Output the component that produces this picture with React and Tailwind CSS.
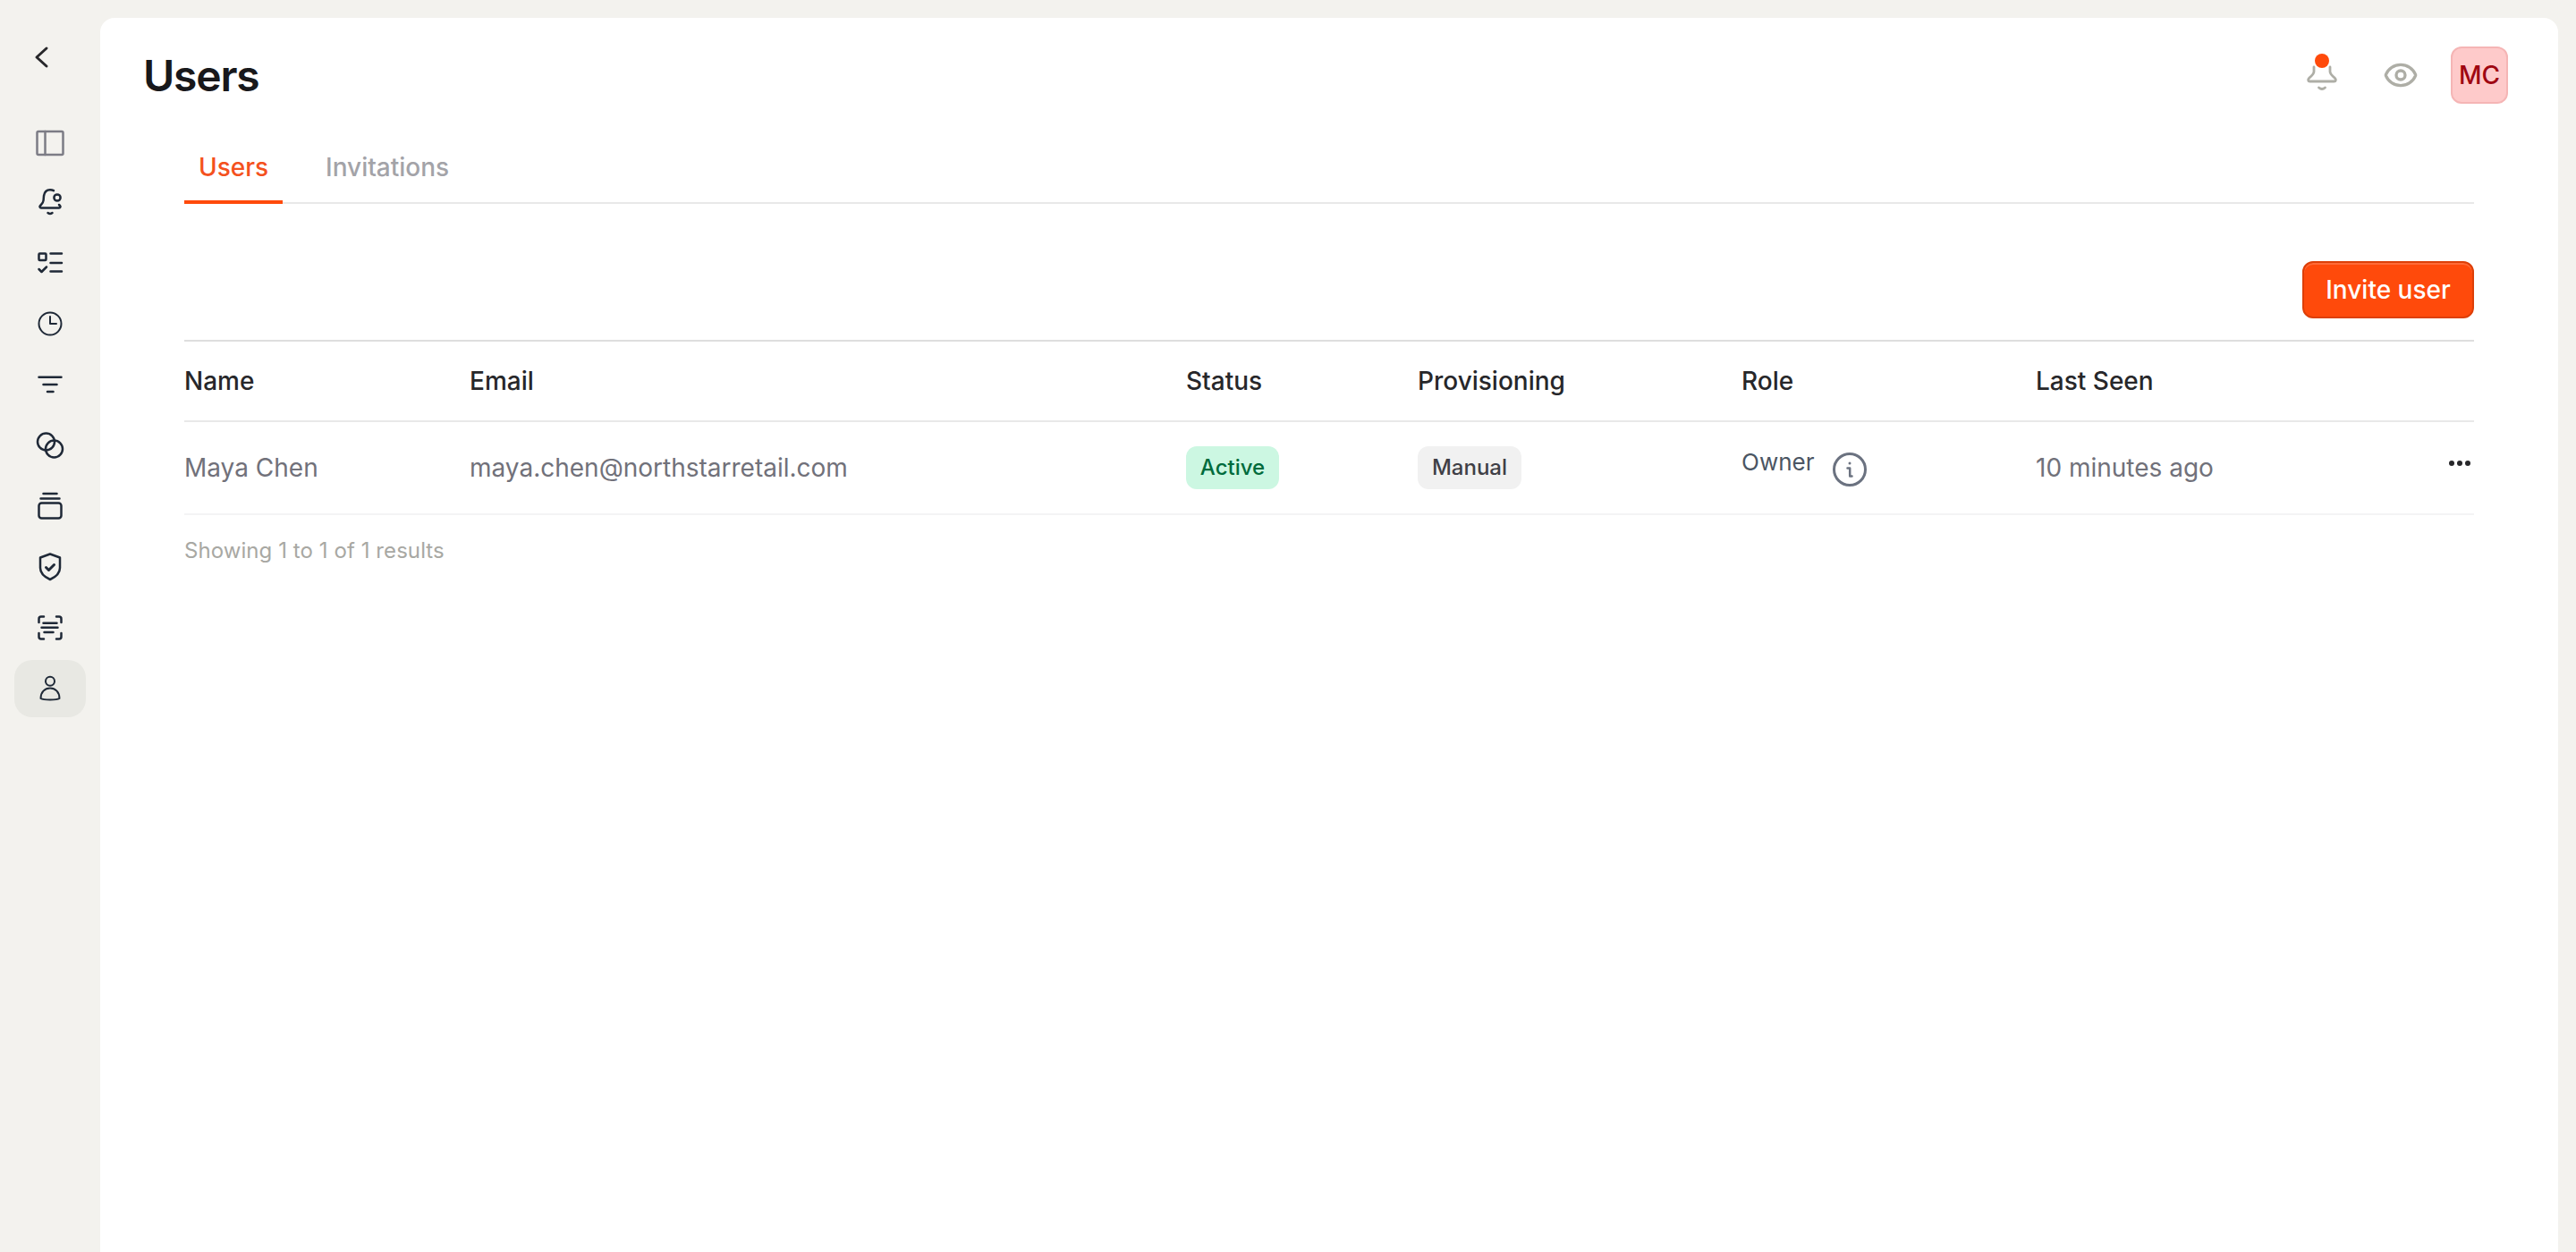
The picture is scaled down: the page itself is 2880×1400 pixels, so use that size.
import { Eye } from "lucide-react"

function SideIcon({ children, color = "#1f2937", sw = 2.5 }) {
  return (
    <svg width="40" height="40" viewBox="0 0 40 40" fill="none" stroke={color} strokeWidth={sw} strokeLinecap="round" strokeLinejoin="round">
      {children}
    </svg>
  )
}

const sideItems = [
  <><circle cx="28" cy="15" r="3.6" /><path d="M24 7.2C22.8 6.5 21.5 6.2 20 6.2C15.5 6.2 13.5 9.5 13 13L12.6 18C12.4 21 10.5 22.5 9 24C8 25 8.5 26.5 10 26.5H30C31.5 26.5 32 25 31 24L30 23" /><path d="M17.5 32Q20 34 22.5 32" /></>,
  <><rect x="7.5" y="9.5" width="8" height="7.5" rx="1" /><path d="M20.5 9.5H33M20.5 20H33M20.5 29.5H33" /><path d="M7.5 27L10.5 30L16 24.5" /></>,
  <><circle cx="20" cy="20" r="12.5" strokeWidth="2" /><path d="M20 12V20H27" strokeWidth="2" /></>,
  <path d="M7.5 11.7H32.5M12.5 20H27.5M17 28H23.5" />,
  <><circle cx="15.5" cy="16" r="9.5" /><circle cx="24.5" cy="24" r="9.5" /></>,
  <><path d="M12.5 6H27.5M9.5 11.5H30.5" /><rect x="7.5" y="16.5" width="25" height="17" rx="3" /></>,
  <><path d="M20 5.5L31 9.5V21C31 27 25.5 31.5 20 34C14.5 31.5 9 27 9 21V9.5Z" /><path d="M15.5 20.5L18.5 23.5L24.5 17.5" strokeWidth="3" /></>,
  <><path d="M7.5 14V10A2.5 2.5 0 0 1 10 7.5H13M27 7.5H30A2.5 2.5 0 0 1 32.5 10V14M32.5 26V30A2.5 2.5 0 0 1 30 32.5H27M13 32.5H10A2.5 2.5 0 0 1 7.5 30V26" /><path d="M12.5 14.7H27.5M10.5 19.8H28.5M13.5 25H23.5" /></>,
]

export default function App() {
  return (
    <div className="flex h-screen overflow-hidden bg-[#f3f2ee] font-['Inter',sans-serif]">
      <aside className="flex w-[112px] shrink-0 flex-col items-center pt-[32px]">
        <button className="flex h-[64px] w-[80px] items-center justify-center pr-[20px]">
          <SideIcon color="#27272a" sw={3}><path d="M26 10L15 20L26 30" /></SideIcon>
        </button>
        <div className="mt-[32px] flex flex-col gap-1">
          <div className="-mb-0.5 flex h-[64px] w-[80px] items-center justify-center">
            <SideIcon color="#7c7c85" sw={2.5}>
              <rect x="5.5" y="7" width="29" height="26" rx="1.5" />
              <path d="M14.5 7V33" />
            </SideIcon>
          </div>
          {sideItems.map((icon, i) => (
            <div key={i} className="flex h-[64px] w-[80px] items-center justify-center">
              <SideIcon>{icon}</SideIcon>
            </div>
          ))}
          <div className="flex h-[64px] w-[80px] items-center justify-center rounded-[20px] bg-[#e8e8e3]">
            <SideIcon sw={2}>
              <circle cx="20" cy="11.7" r="5" />
              <path d="M9.5 31C9.5 24 14 19.5 20 19.5C26 19.5 30.5 24 30.5 31C27 33 13 33 9.5 31Z" />
            </SideIcon>
          </div>
        </div>
      </aside>

      <main className="mt-[20px] mr-[20px] flex-1 rounded-t-2xl bg-white pt-[32px]">
        <header className="flex h-[64px] items-center justify-between pr-[56px] pl-[48px]">
          <h1 className="pt-[1px] text-[48px] leading-[64px] font-semibold tracking-tight text-[#18181b]">Users</h1>
          <div className="flex items-center">
            <div className="relative mr-[48px] h-[40px] w-[40px]">
              <svg width="40" height="40" viewBox="0 0 40 40" fill="none" stroke="#aeaea6" strokeWidth="2.8" strokeLinecap="round" strokeLinejoin="round">
                <path d="M11 11V16C11 19 8 21 5.5 23.5C4 25 4.5 27 6.5 27H33.5C35.5 27 36 25 34.5 23.5C32 21 29 19 29 16V11" />
                <path d="M16.5 34Q20 37 23.5 34" />
              </svg>
              <span className="absolute top-[-4px] left-[12px] h-[16px] w-[16px] rounded-full bg-[#ff4a0b]" />
            </div>
            <Eye size={40} strokeWidth={2} className="mr-[36px] text-[#aeaea6]" />
            <div className="flex h-[64px] w-[64px] items-center justify-center rounded-xl border-2 border-[#f5b5b5] bg-[#fecaca] text-[28px] font-medium text-[#9f0712]">MC</div>
          </div>
        </header>

        <div className="mr-[94px] ml-[94px]">
          <nav className="mt-[54px] flex gap-[32px] border-b-2 border-[#e8e8e8]">
            <div className="-mb-[2px] w-[110px] border-b-4 border-[#ff4a0b] pb-[20px] text-center text-[28px] leading-[34px] font-medium text-[#f4511e]">Users</div>
            <div className="px-[16px] pb-[20px] text-[28px] leading-[34px] font-medium text-[#a3a3a8]">Invitations</div>
          </nav>

          <div className="mt-[64px] mb-[24px] flex justify-end">
            <button className="h-[64px] w-[192px] rounded-xl border-2 border-[#dd3f08] bg-[#ff4a0b] text-[28px] font-medium text-white shadow-[inset_0_2px_0_rgba(255,255,255,0.18)]">Invite user</button>
          </div>

          <div className="grid h-[92px] grid-cols-[319px_801px_259px_362px_329px_1fr] items-center border-y-2 border-t-[#dedede] border-b-[#e8e8e8] text-[28px] font-medium text-[#27272a]">
            <div>Name</div>
            <div>Email</div>
            <div>Status</div>
            <div>Provisioning</div>
            <div>Role</div>
            <div>Last Seen</div>
          </div>

          <div className="grid h-[104px] grid-cols-[319px_801px_259px_362px_329px_1fr] items-center border-b-2 border-[#f4f4f5] text-[28px] text-[#71717a]">
            <div>Maya Chen</div>
            <div>maya.chen@northstarretail.com</div>
            <div>
              <span className="inline-flex h-[48px] w-[104px] items-center justify-center rounded-xl bg-[#ccf7e2] text-[24px] font-medium text-[#006b3c]">Active</span>
            </div>
            <div>
              <span className="inline-flex h-[48px] w-[116px] items-center justify-center rounded-xl bg-[#f1f1f1] text-[24px] font-medium text-[#3f3f46]">Manual</span>
            </div>
            <div className="flex h-[48px] items-start gap-[20px] text-[26px] leading-[36px] text-[#4b5563]">
              <span>Owner</span>
              <svg className="mt-[6px]" width="40" height="40" viewBox="0 0 40 40" fill="none" stroke="#6b7280" strokeWidth="3" strokeLinecap="round" strokeLinejoin="round">
                <circle cx="20" cy="20" r="17.5" />
                <circle cx="20" cy="13" r="1.5" fill="#6b7280" stroke="none" />
                <path d="M17.5 18.5H20.2V27.5H22.5" strokeWidth="2.5" />
              </svg>
            </div>
            <div className="flex items-center justify-between">
              <span>10 minutes ago</span>
              <svg className="mr-[2px] mb-[10px]" width="28" height="8" viewBox="0 0 28 8" fill="#27272a">
                <circle cx="5" cy="4" r="3" />
                <circle cx="14" cy="4" r="3" />
                <circle cx="23" cy="4" r="3" />
              </svg>
            </div>
          </div>

          <p className="mt-[24px] text-[24px] leading-[32px] tracking-[0.07px] text-[#a8a8a3]">Showing 1 to 1 of 1 results</p>
        </div>
      </main>
    </div>
  )
}
